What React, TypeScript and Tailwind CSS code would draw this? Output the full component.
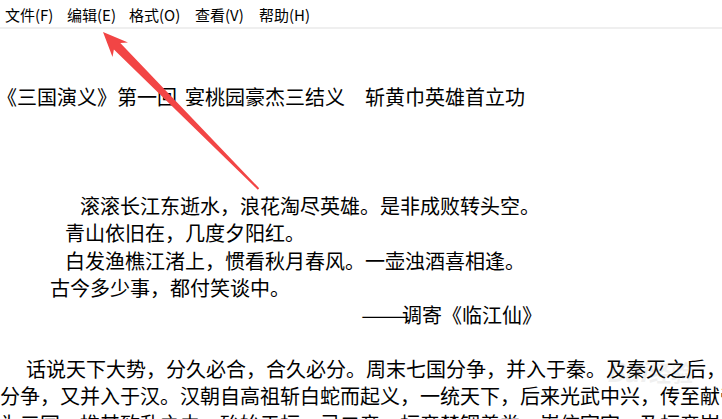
import React from "react";

const menus = [
  { t: "文件(F)", c: "w-[62px]" },
  { t: "编辑(E)", c: "w-[62px]" },
  { t: "格式(O)", c: "w-[66px]" },
  { t: "查看(V)", c: "w-[64px]" },
  { t: "帮助(H)", c: "" },
];

function Line({ children, className = "" }: { children?: React.ReactNode; className?: string }) {
  return <div className={"h-[27.2px] whitespace-pre " + className}>{children}</div>;
}

export default function App() {
  return (
    <div className="relative w-[722px] h-[419px] overflow-hidden bg-white text-black font-['Noto_Sans_CJK_SC',sans-serif]">
      <div className="flex h-[29px] items-center border-b-2 border-[#efefef] pl-[5px] pt-[2px] text-[15px] leading-none">
        {menus.map((m) => (
          <span key={m.t} className={"whitespace-nowrap " + m.c}>
            {m.t}
          </span>
        ))}
      </div>
      <div className="overflow-hidden text-[20px] leading-[27.2px]">
        <Line />
        <Line />
        <Line className="-ml-[3px]">
          《三国演义》第一回<span className="inline-block w-[8px]" />宴桃园豪杰三结义{"\u3000"}斩黄巾英雄首立功
        </Line>
        <Line />
        <Line />
        <Line />
        <Line className="pl-[80px]">滚滚长江东逝水，浪花淘尽英雄。是非成败转头空。</Line>
        <Line className="pl-[65px]">青山依旧在，几度夕阳红。</Line>
        <Line className="pl-[65px]">白发渔樵江渚上，惯看秋月春风。一壶浊酒喜相逢。</Line>
        <Line className="pl-[50px]">古今多少事，都付笑谈中。</Line>
        <Line className="pl-[361px]">
          <span className="inline-block w-[41px] overflow-visible">
            <span className="inline-block origin-left scale-x-[1.45]">——</span>
          </span>
          调寄《临江仙》
        </Line>
        <Line />
        <Line className="pl-[26px]">话说天下大势，分久必合，合久必分。周末七国分争，并入于秦。及秦灭之后，楚、汉分争，</Line>
        <Line>分争，又并入于汉。汉朝自高祖斩白蛇而起义，一统天下，后来光武中兴，传至献帝，遂分</Line>
        <Line>为三国。推其致乱之由，殆始于桓、灵二帝。桓帝禁锢善类，崇信宦官。及桓帝崩，灵帝即位，</Line>
      </div>
      <div className="pointer-events-none absolute left-[606px] top-[358px] flex items-center gap-[2px] text-[26px] font-bold italic leading-none text-[#8a8a8a] opacity-[0.12]">
        <span>Bai</span>
        <span className="text-[22px] not-italic">经验</span>
      </div>
      <svg className="pointer-events-none absolute left-0 top-0" width="722" height="419" viewBox="0 0 722 419">
        <polygon
          points="103,32 128,42.5 120.3,43 259.2,188.3 257.8,189.7 113.9,49.4 112.5,57"
          fill="#f24545"
        />
      </svg>
    </div>
  );
}
